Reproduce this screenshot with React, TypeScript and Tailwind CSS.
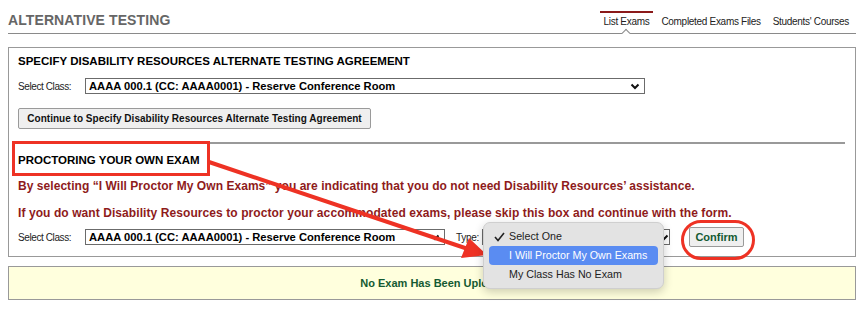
import React from "react";

function Chevron() {
  return (
    <svg width="10" height="7" viewBox="0 0 10 7" className="shrink-0">
      <polyline points="1.5,1.5 5,5 8.5,1.5" fill="none" stroke="#111" strokeWidth="2" />
    </svg>
  );
}

function FakeSelect({ width, text, pr }: { width: string; text?: string; pr: string }) {
  return (
    <div className={`${width} ${pr} h-[16px] border border-[#6b6b6b] bg-white flex items-center justify-between pl-[3px]`}>
      <span className="text-[11.2px] leading-[14px] font-bold text-black whitespace-nowrap">{text}</span>
      <Chevron />
    </div>
  );
}

export default function App() {
  return (
    <div className="relative w-[860px] h-[310px] overflow-hidden bg-white font-['Liberation_Sans',Arial,sans-serif]">
      <div className="pl-[8px] pr-[4px]">
        {/* header */}
        <div className="relative flex h-[34px] items-start justify-between border-b border-[#8a8a8a]">
          <h1 className="pt-[12px] text-[14px] leading-[16px] font-bold text-[#666] tracking-[0.1px]">ALTERNATIVE TESTING</h1>
          <div className="flex pt-[11px] pr-[3px] text-[10px] text-[#222] tracking-[-0.3px] gap-[4px]">
            <div className="relative border-t-2 border-[#8b1a1a] px-[4px] pt-[3px] leading-[12px]">
              List Exams
              <div className="absolute left-1/2 top-[17px] -ml-[3px] w-[6px] h-[6px] rotate-45 bg-white border-l border-t border-[#8a8a8a]" />
            </div>
            <div className="border-t-2 border-transparent px-[4px] pt-[3px] leading-[12px]">Completed Exams Files</div>
            <div className="border-t-2 border-transparent px-[4px] pt-[3px] leading-[12px]">Students' Courses</div>
          </div>
        </div>

        {/* main box */}
        <div className="mt-[13px] border border-[#999] pl-[9px] pr-[10px] pt-[6px] pb-[9px]">
          <h2 className="text-[11.5px] leading-[14px] font-bold text-black">SPECIFY DISABILITY RESOURCES ALTERNATE TESTING AGREEMENT</h2>
          <div className="mt-[10px] flex items-center h-[16px]">
            <span className="w-[67px] text-[10px] text-[#222] tracking-[-0.4px]">Select Class:</span>
            <FakeSelect width="w-[560px]" pr="pr-[4px]" text="AAAA 000.1 (CC: AAAA0001) - Reserve Conference Room" />
          </div>
          <button className="mt-[14px] h-[21px] w-[353px] bg-[#efefef] border border-[#9a9a9a] rounded-[2px] text-[10px] tracking-[0.02px] whitespace-nowrap font-bold text-[#111] flex items-center justify-center">
            Continue to Specify Disability Resources Alternate Testing Agreement
          </button>
          <div className="mt-[13px] h-[2px] bg-[#999]" />
          <h2 className="mt-[9px] text-[11.5px] leading-[14px] font-bold text-black">PROCTORING YOUR OWN EXAM</h2>
          <p className="mt-[12px] text-[12px] leading-[14px] font-bold tracking-[0.05px] text-[#8e1b1b] whitespace-nowrap">
            By selecting “I Will Proctor My Own Exams” you are indicating that you do not need Disability Resources’ assistance.
          </p>
          <p className="mt-[13px] text-[12px] leading-[14px] font-bold tracking-[0.08px] text-[#8e1b1b] whitespace-nowrap">
            If you do want Disability Resources to proctor your accommodated exams, please skip this box and continue with the form.
          </p>
          <div className="mt-[7px] flex items-center h-[20px]">
            <span className="w-[67px] text-[10px] text-[#222] tracking-[-0.4px]">Select Class:</span>
            <FakeSelect width="w-[360px]" pr="pr-[4px]" text="AAAA 000.1 (CC: AAAA0001) - Reserve Conference Room" />
            <span className="ml-[11px] w-[26px] text-[10px] text-[#222] tracking-[-0.3px]">Type:</span>
            <FakeSelect width="w-[188px]" pr="pr-0" text="" />
            <button className="ml-[19px] h-[20px] w-[55px] bg-[#efefef] border border-[#9a9a9a] rounded-[2px] text-[11px] font-bold text-[#145a32]">
              Confirm
            </button>
          </div>
        </div>

        {/* yellow message */}
        <div className="mt-[9px] h-[34px] border border-[#999] bg-[#ffffdd] flex items-center justify-center">
          <span className="text-[11px] font-bold text-[#145a32] pl-[10px]">No Exam Has Been Uploaded</span>
        </div>
      </div>

      {/* annotation: red box */}
      <div className="absolute left-[12px] top-[141px] w-[198px] h-[35px] border-[3.5px] border-[#ee3224]" />

      {/* annotation: ellipse */}
      <div className="absolute left-[681px] top-[220px] w-[74px] h-[40px] rounded-[20px] border-[3.5px] border-[#ee3224]" />

      {/* annotation: arrow */}
      <svg className="absolute left-0 top-0 pointer-events-none" width="860" height="310" viewBox="0 0 860 310">
        <line x1="209" y1="162" x2="468" y2="249" stroke="#ee3224" strokeWidth="4" />
        <polygon points="487,255 461,258 469,238" fill="#ee3224" />
      </svg>

      {/* dropdown */}
      <div className="absolute left-[483px] top-[222px] w-[181px] rounded-[7px] bg-[#e3e3e3] border border-[#cfcfcf] shadow-[0_3px_10px_rgba(0,0,0,0.2)] px-[5px] py-[4px] text-[10.7px] text-[#222]">
        <div className="relative h-[19px] flex items-center pl-[20px]">
          <svg className="absolute left-[5px] top-[5px]" width="11" height="10" viewBox="0 0 11 10">
            <polyline points="1,5 4,8.5 10,1" fill="none" stroke="#222" strokeWidth="1.6" />
          </svg>
          Select One
        </div>
        <div className="h-[19px] flex items-center pl-[20px] rounded-[4px] bg-[#5a8cf2] text-white">I Will Proctor My Own Exams</div>
        <div className="h-[19px] flex items-center pl-[20px]">My Class Has No Exam</div>
      </div>
    </div>
  );
}
